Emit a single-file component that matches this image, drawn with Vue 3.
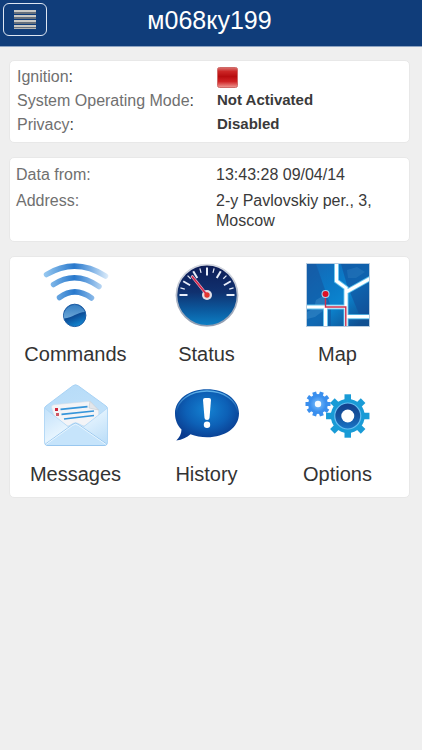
<script setup>
const vehicle = 'м068ку199'

const ticks = Array.from({ length: 13 }, (_, i) => ({
  angle: -90 + i * 15,
  major: i % 2 === 0,
}))
const bigTeeth = Array.from({ length: 8 }, (_, i) => i * 45)
const smallTeeth = Array.from({ length: 10 }, (_, i) => i * 36)
</script>

<template>
  <div class="page">
    <header class="bar">
      <button class="menu" type="button" aria-label="Menu">
        <svg width="22" height="20" viewBox="0 0 22 20" aria-hidden="true">
          <g v-for="y in [0, 5, 10, 15]" :key="y">
            <rect x="0" :y="y" width="22" height="2" fill="#c9c9c6" />
            <rect x="0" :y="y + 2" width="22" height="2" fill="#66707c" />
          </g>
          <rect x="0" y="18" width="22" height="1" fill="#b5b5b2" />
        </svg>
      </button>
      <h1 class="title">{{ vehicle }}</h1>
    </header>

    <main class="content">
      <dl class="card state">
        <dt>Ignition<span class="colon">:</span></dt>
        <dd>
          <svg class="lamp" width="21" height="21" viewBox="0 0 21 21" role="img" aria-label="Off">
            <defs>
              <linearGradient id="lamp" x1="0" y1="0" x2="0" y2="1">
                <stop offset="0" stop-color="#d87470" />
                <stop offset="0.2" stop-color="#cc2626" />
                <stop offset="0.45" stop-color="#b80d10" />
                <stop offset="0.7" stop-color="#cf2325" />
                <stop offset="1" stop-color="#f09a94" />
              </linearGradient>
            </defs>
            <rect x="0.5" y="0.5" width="20" height="20" rx="2" fill="url(#lamp)" stroke="#cf6a68" />
          </svg>
        </dd>
        <dt>System Operating Mode<span class="colon">:</span></dt>
        <dd>Not Activated</dd>
        <dt>Privacy<span class="colon">:</span></dt>
        <dd>Disabled</dd>
      </dl>

      <dl class="card place">
        <dt>Data from:</dt>
        <dd>13:43:28 09/04/14</dd>
        <dt>Address:</dt>
        <dd>2-y Pavlovskiy per., 3, Moscow</dd>
      </dl>

      <nav class="card tiles">
        <button class="tile" type="button">
          <svg class="icon" viewBox="0 0 70 70" aria-hidden="true">
            <defs>
              <linearGradient id="wave" gradientUnits="userSpaceOnUse" x1="2" y1="0" x2="67" y2="0">
                <stop offset="0" stop-color="#9cccf2" />
                <stop offset="0.48" stop-color="#2878cc" />
                <stop offset="0.75" stop-color="#7fb2e6" />
                <stop offset="1" stop-color="#dcecfa" />
              </linearGradient>
              <linearGradient id="ball" x1="0.2" y1="0" x2="0.6" y2="1">
                <stop offset="0" stop-color="#1f63ad" />
                <stop offset="0.5" stop-color="#0b4690" />
                <stop offset="1" stop-color="#1287d2" />
              </linearGradient>
              <linearGradient id="shine" x1="0" y1="0" x2="0" y2="1">
                <stop offset="0" stop-color="#3c86c8" />
                <stop offset="1" stop-color="#7db8e4" />
              </linearGradient>
            </defs>
            <g fill="none" stroke="url(#wave)" stroke-width="5.5" stroke-linecap="round">
              <path d="M5.5 14.5Q34.5 -3 64.5 16" />
              <path d="M12.5 24.5Q34.5 10 58 26.5" />
              <path d="M18.5 37.5Q34 26 50.5 38" />
            </g>
            <circle cx="33.7" cy="55.4" r="11.2" fill="url(#ball)" stroke="#1d5da5" />
            <path d="M22.9 56.5A10.8 10.8 0 0 1 43.8 52C37 52 31 58 23.3 58.5Z" fill="url(#shine)" opacity="0.85" />
          </svg>
          <span>Commands</span>
        </button>

        <button class="tile" type="button">
          <svg class="icon" viewBox="0 0 70 70" aria-hidden="true">
            <defs>
              <linearGradient id="dial" x1="0" y1="0" x2="0" y2="1">
                <stop offset="0" stop-color="#0d1c56" />
                <stop offset="0.45" stop-color="#10316f" />
                <stop offset="0.75" stop-color="#0b5ba0" />
                <stop offset="1" stop-color="#0d80c6" />
              </linearGradient>
              <linearGradient id="rim" x1="0" y1="0" x2="0" y2="1">
                <stop offset="0" stop-color="#d8dbe3" />
                <stop offset="1" stop-color="#8e9bb0" />
              </linearGradient>
            </defs>
            <circle cx="35" cy="35.3" r="31.5" fill="#dfe2e8" />
            <circle cx="35" cy="35.3" r="30.5" fill="url(#dial)" stroke="url(#rim)" stroke-width="1.6" />
            <line
              v-for="t in ticks"
              :key="t.angle"
              x1="35"
              x2="35"
              y1="7.5"
              :y2="t.major ? 15.5 : 12"
              stroke="#e8eefa"
              :stroke-width="t.major ? 2 : 1.2"
              :transform="`rotate(${t.angle} 35 35)`"
            />
            <circle cx="35" cy="35" r="5" fill="#e3dfe6" />
            <path d="M35 35L20.3 16.6" stroke="#e9b9cb" stroke-width="2.8" stroke-linecap="round" />
            <path d="M35 35L20.5 17" stroke="#d22a4e" stroke-width="1.7" stroke-linecap="round" />
            <circle cx="35" cy="35" r="2.7" fill="#e2362f" />
          </svg>
          <span>Status</span>
        </button>

        <button class="tile" type="button">
          <svg class="icon" viewBox="0 0 70 70" aria-hidden="true">
            <defs>
              <linearGradient id="land" x1="0" y1="0" x2="0.8" y2="1">
                <stop offset="0" stop-color="#1765b2" />
                <stop offset="0.4" stop-color="#0b79c6" />
                <stop offset="0.62" stop-color="#0b84cf" />
                <stop offset="1" stop-color="#105092" />
              </linearGradient>
              <clipPath id="sheet"><rect x="4" y="4" width="62" height="62" /></clipPath>
            </defs>
            <g clip-path="url(#sheet)">
              <rect x="4" y="4" width="62" height="62" fill="url(#land)" />
              <path d="M4 4H13L28 47V66H4Z" fill="#15549d" opacity="0.55" />
              <path d="M38 4H66V60L56 54L44 25Z" fill="#124f99" opacity="0.6" />
              <path d="M4 52L11 48L13 40L20 36L24 41L20 51L12 57L4 59Z" fill="#4795d0" opacity="0.4" />
              <path d="M44 10L54 7L62 12L53 18L45 18Z" fill="#3684c4" opacity="0.35" />
              <path
                d="M33.5 2V21L43 28V68M43 32L67 18.5M2 47H43M22.5 47V68M43 56.7H68"
                fill="none" stroke="#5fc4ef" stroke-width="5"
              />
              <path
                d="M33.5 2V21L43 28V68M43 32L67 18.5M2 47H43M22.5 47V68M43 56.7H68"
                fill="none" stroke="#fff" stroke-width="3.2"
              />
              <path d="M22.5 34V47H42.8V66" fill="none" stroke="#c9304f" stroke-width="1.4" />
            </g>
            <circle cx="22.5" cy="34" r="4" fill="#a9d5ee" />
            <circle cx="22.5" cy="34" r="3" fill="#df1026" />
            <rect x="3.5" y="3.5" width="63" height="63" fill="none" stroke="#b9cde0" />
          </svg>
          <span>Map</span>
        </button>

        <button class="tile" type="button">
          <svg class="icon" viewBox="0 0 70 70" aria-hidden="true">
            <defs>
              <linearGradient id="env" x1="0" y1="0" x2="0.3" y2="1">
                <stop offset="0" stop-color="#b5dbf8" />
                <stop offset="1" stop-color="#c5e3fa" />
              </linearGradient>
              <linearGradient id="front" x1="0" y1="0" x2="1" y2="1">
                <stop offset="0" stop-color="#c2e1fa" />
                <stop offset="0.45" stop-color="#e6f4fe" />
                <stop offset="1" stop-color="#b8dcf8" />
              </linearGradient>
            </defs>
            <path
              d="M3.5 29Q3.5 27 5 26L31.5 6Q34.5 3.5 37.5 6L65 26Q66.5 27 66.5 29V62Q66.5 65.5 63 65.5H7Q3.5 65.5 3.5 62Z"
              fill="url(#env)" stroke="#a9d3f5"
            />
            <path d="M10.5 27Q10.5 25 13 24.7L49 21.3L57.5 30L58 46H16Z" fill="#f3f4f7" stroke="#d3dde7" stroke-width="0.6" />
            <path d="M49 21.3L48 28L57.5 30Z" fill="#e3e6ea" stroke="#bbc4cc" stroke-width="0.5" />
            <g fill="none" stroke="#3695da" stroke-width="1.7">
              <path d="M19.5 29.3L46.5 26.7M20.5 34.3L53 31M23 39L53 35.5" />
            </g>
            <rect x="14" y="28" width="3" height="3" fill="#cf2438" />
            <rect x="15" y="33" width="3" height="3" fill="#cf5a66" />
            <path
              d="M3.5 28L27 46.5L32 43.5Q34.5 42 37 43.5L43 46.5L66.5 28V62Q66.5 65.5 63 65.5H7Q3.5 65.5 3.5 62Z"
              fill="url(#front)" stroke="#b1d7f5" stroke-width="0.8"
            />
            <path
              d="M4.5 64L31.5 44.5Q34.5 42 37.5 44.5L65.5 64Q65 65.5 63 65.5H7Q5 65.5 4.5 64Z"
              fill="#c6e4fb" stroke="#8fc2ec" stroke-width="0.8"
            />
            <path d="M5 64.5L31.5 45.5Q34.5 43 37.5 45.5L65 64.5" fill="none" stroke="#e9f6ff" />
          </svg>
          <span>Messages</span>
        </button>

        <button class="tile" type="button">
          <svg class="icon" viewBox="0 0 70 70" aria-hidden="true">
            <defs>
              <radialGradient id="bubble" cx="0.5" cy="0.4" r="0.6">
                <stop offset="0" stop-color="#1482d2" />
                <stop offset="0.55" stop-color="#0d60b6" />
                <stop offset="1" stop-color="#0a3b8e" />
              </radialGradient>
              <linearGradient id="gloss" x1="0" y1="0" x2="0" y2="1">
                <stop offset="0" stop-color="#5fb2ea" />
                <stop offset="0.5" stop-color="#5fb2ea" stop-opacity="0" />
              </linearGradient>
            </defs>
            <path
              d="M35 9.3C53 9.3 67 19.5 67 33.5S53 57.3 35 57.3C29 57.3 23.5 56.3 18.5 54.3C15 57.5 10 60 4.3 60.5C7.5 57.5 9.5 53.5 9.5 49.5C5.5 45.5 3 40 3 33.5C3 19.5 17 9.3 35 9.3Z"
              fill="url(#bubble)"
            />
            <ellipse cx="35" cy="33" rx="30.5" ry="22" fill="none" stroke="url(#gloss)" stroke-width="1.3" />
            <path d="M31 20Q31 18 33 18H37Q39 18 39 20L37.5 38Q37.3 40 35 40T32.5 38Z" fill="#fff" />
            <circle cx="35" cy="44.7" r="3.2" fill="#fff" />
          </svg>
          <span>History</span>
        </button>

        <button class="tile" type="button">
          <svg class="icon" viewBox="0 0 70 70" aria-hidden="true">
            <defs>
              <radialGradient id="cog" cx="0.5" cy="0.5" r="0.5">
                <stop offset="0" stop-color="#7cc0fb" />
                <stop offset="1" stop-color="#3a8fee" />
              </radialGradient>
              <linearGradient id="hub" x1="0" y1="0" x2="0" y2="1">
                <stop offset="0" stop-color="#123f8c" />
                <stop offset="0.5" stop-color="#15549f" />
                <stop offset="1" stop-color="#1975c8" />
              </linearGradient>
            </defs>
            <g fill="#3a8fee">
              <rect
                v-for="a in smallTeeth" :key="a" x="13" y="11.5" width="4" height="5"
                :transform="`rotate(${a + 18} 15 24)`"
              />
              <circle cx="15" cy="24" r="10" />
            </g>
            <circle cx="15" cy="24" r="8" fill="url(#cog)" />
            <circle cx="15" cy="24" r="3.2" fill="#f4faff" />
            <g fill="#199bd6">
              <rect
                v-for="a in bigTeeth" :key="a" x="41.5" y="14.3" width="6.5" height="8"
                :transform="`rotate(${a} 44.75 36)`"
              />
              <circle cx="44.75" cy="36" r="17" />
            </g>
            <circle cx="44.75" cy="36" r="13" fill="url(#hub)" stroke="#65bdf0" stroke-width="1.2" />
            <circle cx="44.75" cy="36" r="6.5" fill="#fff" />
          </svg>
          <span>Options</span>
        </button>
      </nav>
    </main>
  </div>
</template>

<style>
body {
  margin: 0;
  background: #efefef;
}
</style>

<style scoped>
.page {
  min-height: 100vh;
  background: #efefef;
  color: #3a3a3a;
  font-family: "Liberation Sans", Arial, sans-serif;
}

.bar {
  display: grid;
  grid-template-columns: 44px 1fr 44px;
  align-items: start;
  box-sizing: border-box;
  height: 47px;
  padding: 3px 6px 0 3px;
  background: #103d7a;
  border-bottom: 1px solid #8ea4c2;
}

.menu {
  display: flex;
  align-items: center;
  justify-content: center;
  box-sizing: border-box;
  width: 44px;
  height: 33px;
  padding: 0;
  background: transparent;
  border: 1px solid #dde6f2;
  border-radius: 6px;
}

.title {
  margin: 0;
  color: #fff;
  font-size: 25px;
  font-weight: 400;
  line-height: 34px;
  text-align: center;
}

.content {
  display: flex;
  flex-direction: column;
  gap: 14px;
  padding: 13px 12px 14px 9px;
}

.card {
  margin: 0;
  background: #fff;
  border: 1px solid #e8e8e8;
  border-radius: 5px;
}

.state,
.place {
  display: grid;
  grid-template-columns: 200px 1fr;
  font-size: 16px;
}

dt {
  color: #707070;
}

dd {
  margin: 0;
}

.colon {
  color: #3a3a3a;
}

.state {
  padding: 4px 7px 5px;
  line-height: 24px;
}

.state dd {
  font-size: 15px;
  font-weight: 700;
  line-height: 22px;
}

.lamp {
  display: block;
  margin-top: 2px;
}

.place {
  row-gap: 6px;
  padding: 7px 6px 10px;
  line-height: 20px;
}

.place dd {
  max-width: 170px;
}

.tiles {
  display: grid;
  grid-template-columns: repeat(3, 1fr);
  row-gap: 10px;
  padding: 3px 6px 7px 0;
}

.tile {
  display: flex;
  flex-direction: column;
  align-items: center;
  gap: 8px;
  padding: 0;
  background: transparent;
  border: 0;
  color: #333;
  font-family: inherit;
  font-size: 20px;
  line-height: 32px;
}

.icon {
  width: 70px;
  height: 70px;
}
</style>
